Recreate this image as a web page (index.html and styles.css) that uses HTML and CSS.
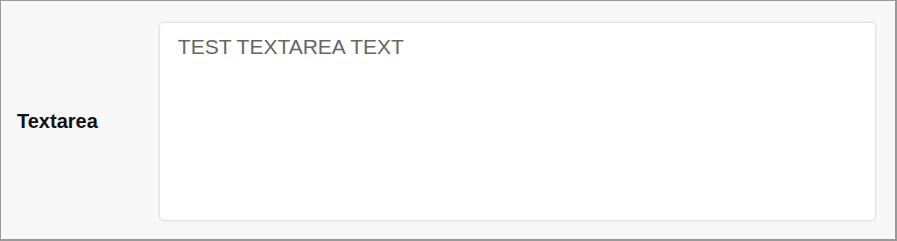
FILE: index.html
```html
<!DOCTYPE html>
<html>
<head>
<meta charset="utf-8">
<link rel="stylesheet" href="styles.css">
</head>
<body>
<div class="frame">
  <div class="row">
    <label class="label" for="ta">Textarea</label>
    <textarea id="ta" class="field">TEST TEXTAREA TEXT</textarea>
  </div>
</div>
</body>
</html>
```
FILE: styles.css
```css
html, body {
  margin: 0;
  padding: 0;
  background: #f7f7f7;
}
.frame {
  box-sizing: border-box;
  width: 897px;
  height: 241px;
  border-style: solid;
  border-color: #999999;
  border-width: 1px 2px 2px 1px;
  background: #f7f7f7;
  padding: 21px 19px 20px 16px;
}
.row {
  display: flex;
  align-items: center;
  height: 198px;
}
.label {
  width: 142px;
  font-family: "Liberation Sans", Arial, sans-serif;
  font-weight: bold;
  font-size: 20px;
  color: #111;
}
.field {
  box-sizing: border-box;
  width: 718px;
  height: 199px;
  margin: 0;
  border: 1px solid #e3e3e3;
  box-shadow: 0 0 0 1px #f0f0f0;
  border-radius: 5px;
  background: #fff;
  padding: 12px 18px;
  font-family: "Liberation Sans", Arial, sans-serif;
  font-size: 21px;
  color: #666;
  resize: none;
  outline: none;
}
```
